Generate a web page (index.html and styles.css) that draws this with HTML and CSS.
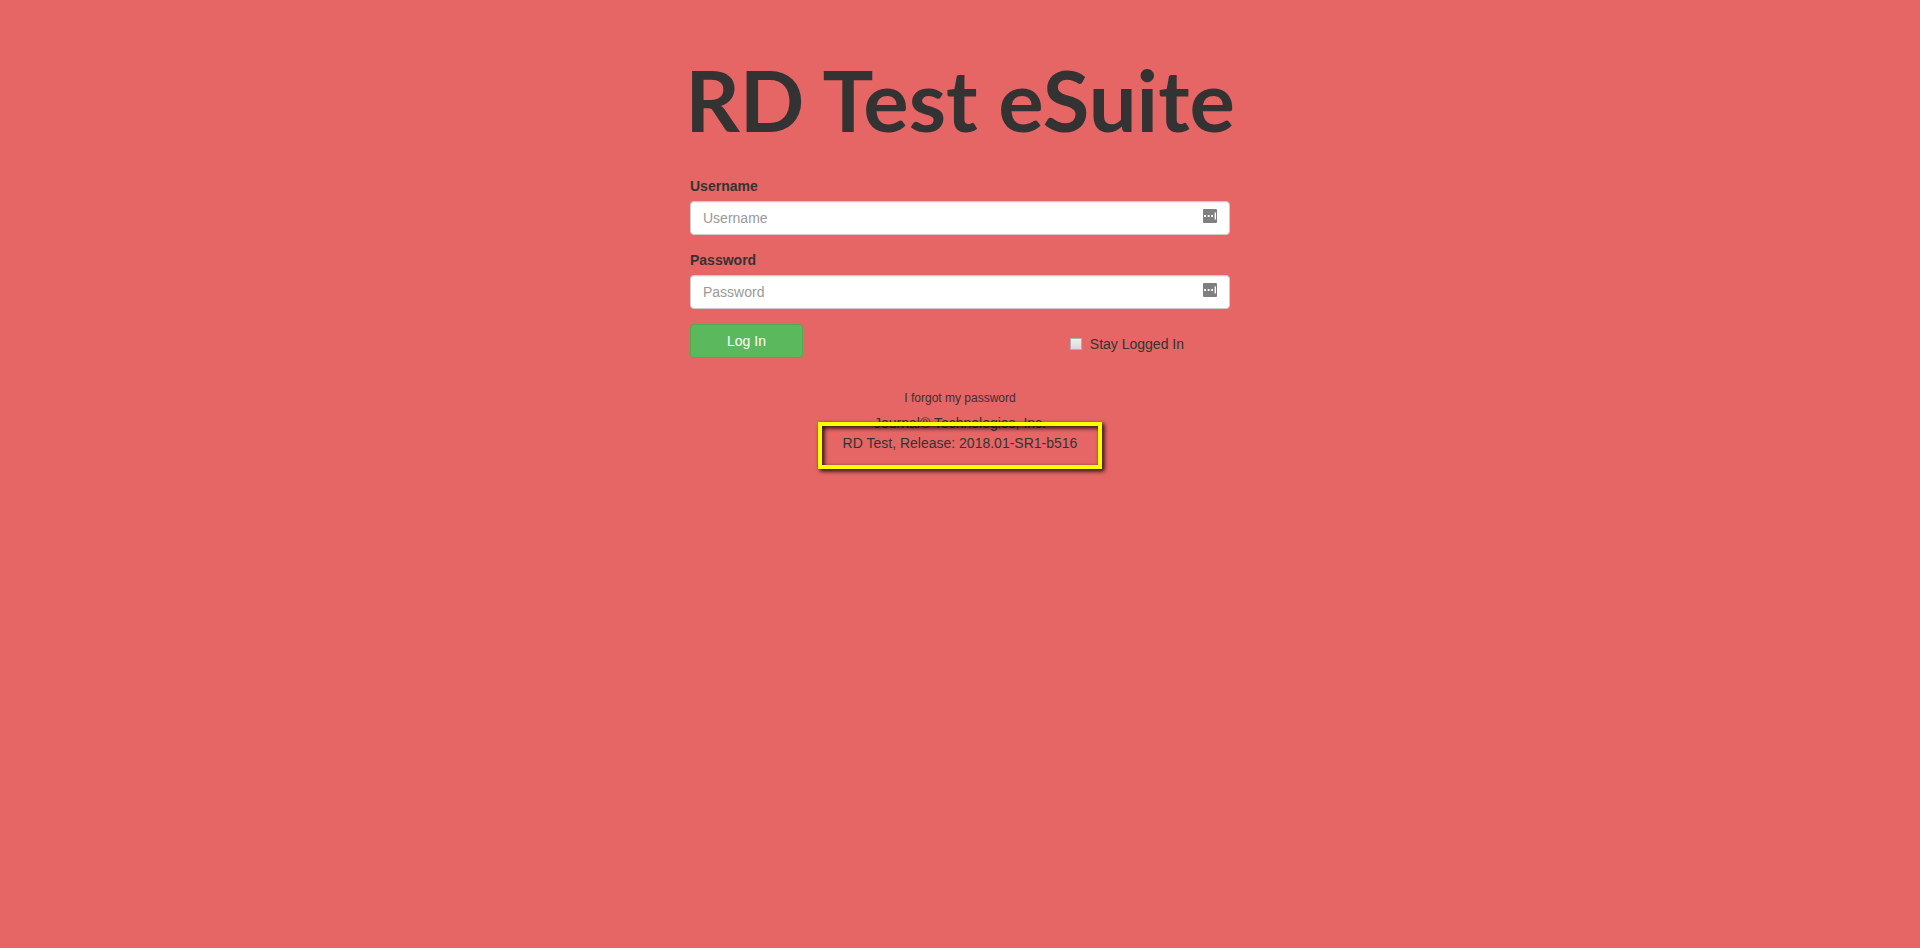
FILE: index.html
```html
<!DOCTYPE html>
<html lang="en">
<head>
<meta charset="utf-8">
<title>RD Test eSuite</title>
<link rel="stylesheet" href="styles.css">
</head>
<body>
<main class="login">
  <h1 class="title">RD Test eSuite</h1>
  <form class="form">
    <div class="group">
      <label class="label" for="username">Username</label>
      <div class="field">
        <input class="control" id="username" type="text" placeholder="Username">
        <svg class="key" viewBox="0 0 14 14" aria-hidden="true"><rect width="14" height="14" rx="1" fill="#7f7f7f"/><path d="M1.2 6h1.8v2H1.2zM4.7 6h1.8v2H4.7zM8.2 6H10v2H8.2zM11.6 3.6h1.4v7h-1.4z" fill="#fff"/></svg>
      </div>
    </div>
    <div class="group">
      <label class="label" for="password">Password</label>
      <div class="field">
        <input class="control" id="password" type="password" placeholder="Password">
        <svg class="key" viewBox="0 0 14 14" aria-hidden="true"><rect width="14" height="14" rx="1" fill="#7f7f7f"/><path d="M1.2 6h1.8v2H1.2zM4.7 6h1.8v2H4.7zM8.2 6H10v2H8.2zM11.6 3.6h1.4v7h-1.4z" fill="#fff"/></svg>
      </div>
    </div>
    <div class="actions">
      <button class="submit" type="submit">Log In</button>
      <label class="stay"><input class="check" type="checkbox">Stay Logged In</label>
    </div>
  </form>
  <a class="forgot" href="#">I forgot my password</a>
  <footer class="about">
    <div>Journal® Technologies, Inc.</div>
    <div class="release">RD Test, Release: 2018.01-SR1-b516<span class="frame"></span></div>
  </footer>
</main>
</body>
</html>
```
FILE: styles.css
```css
* { box-sizing: border-box; }
body {
  min-height: 100vh;
  margin: 0;
  background: #e66665;
  color: #333;
  font: 14px/20px "Liberation Sans", Arial, sans-serif;
}
.login {
  display: flex;
  flex-direction: column;
  align-items: center;
  max-width: 540px;
  margin: 0 auto;
  padding: 53px 0 32px;
}
.title {
  margin: 0 0 31px;
  font: 700 85px/92px Lato, sans-serif;
  white-space: nowrap;
}
.form { width: 100%; }
.group { margin-bottom: 15px; }
.label {
  display: block;
  margin-bottom: 5px;
  font-weight: 700;
}
.field { position: relative; }
.control {
  display: block;
  width: 100%;
  height: 34px;
  padding: 6px 12px;
  border: 1px solid #ccc;
  border-radius: 4px;
  background: #fff;
  box-shadow: inset 0 1px 1px rgba(0, 0, 0, .075);
  color: #555;
  font: inherit;
}
.control::placeholder { color: #999; opacity: 1; }
.key {
  position: absolute;
  top: 8px;
  right: 13px;
  width: 14px;
  height: 14px;
}
.actions {
  display: flex;
  justify-content: space-between;
  padding-right: 46px;
}
.submit {
  width: 113px;
  height: 34px;
  padding: 6px 12px;
  border: 1px solid #4cae4c;
  border-radius: 4px;
  background: #5cb85c;
  color: #fff;
  font: inherit;
}
.stay {
  display: flex;
  align-items: center;
  gap: 8px;
  padding-top: 6px;
}
.check {
  appearance: none;
  width: 12px;
  height: 12px;
  margin: 0;
  border: 1px solid #b0b0b0;
  background: linear-gradient(#eee, #d8d8d8);
}
.forgot {
  margin-top: 30px;
  color: inherit;
  font-size: 12px;
  text-decoration: none;
}
.about {
  margin-top: 5px;
  text-align: center;
}
.release { position: relative; }
.frame {
  position: absolute;
  inset: -11px -25px -16px;
  border: 4px solid #ff0;
  filter: drop-shadow(2px 2px 2px #000);
}
```
